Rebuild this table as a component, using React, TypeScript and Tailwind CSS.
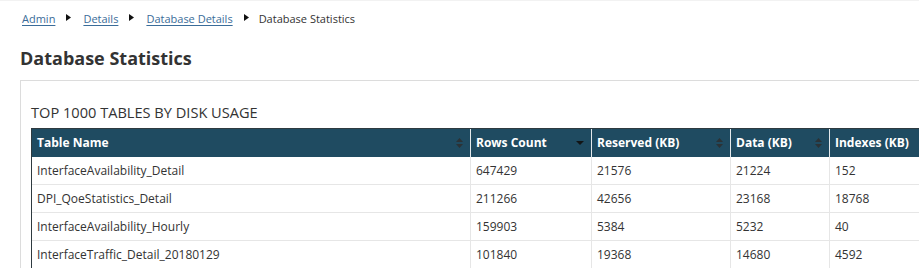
import React from "react";

const crumbs = ["Admin", "Details", "Database Details"];

const rows = [
  ["InterfaceAvailability_Detail", "647429", "21576", "21224", "152"],
  ["DPI_QoeStatistics_Detail", "211266", "42656", "23168", "18768"],
  ["InterfaceAvailability_Hourly", "159903", "5384", "5232", "40"],
  ["InterfaceTraffic_Detail_20180129", "101840", "19368", "14680", "4592"],
];

const widths = ["w-[438px]", "w-[121px]", "w-[139px]", "w-[99px]", "w-[220px]"];

function Arrow() {
  return (
    <svg width="5" height="7" viewBox="0 0 5 7" className="ml-[11px] mr-[12px] mt-[3px]">
      <path d="M0 0 L5 3.5 L0 7 Z" fill="#111" />
    </svg>
  );
}

function SortBoth() {
  return (
    <svg width="7" height="10" viewBox="0 0 7 10">
      <path d="M3.5 0 L7 4 L0 4 Z M0 6 L7 6 L3.5 10 Z" fill="#2b3236" />
    </svg>
  );
}

function SortDown() {
  return (
    <svg width="8" height="4" viewBox="0 0 8 4">
      <path d="M0 0 L8 0 L4 4 Z" fill="#121516" />
    </svg>
  );
}

const headers = [
  { label: "Table Name", icon: <SortBoth /> },
  { label: "Rows Count", icon: <SortDown /> },
  { label: "Reserved (KB)", icon: <SortBoth /> },
  { label: "Data (KB)", icon: <SortBoth /> },
  { label: "Indexes (KB)", icon: null },
];

export default function App() {
  return (
    <div
      className="h-[268px] w-[919px] overflow-hidden bg-white border-t border-[#f2f2f2] px-[20px] text-[#333]"
      style={{ fontFamily: '"Open Sans", "Liberation Sans", sans-serif' }}
    >
      <div className="mt-[10px] h-[15px] pl-[2px] flex items-start text-[11px] leading-[15px]">
        {crumbs.map((c) => (
          <React.Fragment key={c}>
            <a href="#" className="text-[#3a6c99] underline underline-offset-[2px]">
              {c}
            </a>
            <Arrow />
          </React.Fragment>
        ))}
        <span className="-ml-[2px]">Database Statistics</span>
      </div>

      <h1 className="mt-[20px] h-[24px] text-[18px] leading-[24px] font-bold text-[#333]">
        Database Statistics
      </h1>

      <div className="mt-[10px] w-[1100px] border border-r-0 border-[#dcdcdc] pl-[10px] pt-[21px] pb-[20px]">
        <h2 className="h-[20px] text-[14.6px] leading-[20px] font-normal mb-[6px]">
          TOP 1000 TABLES BY DISK USAGE
        </h2>

        <div className="border-t border-l border-[#2e3a40] w-[1020px]">
          <div className="flex h-[28px] bg-[#1f4b61] text-white text-[12px] font-bold">
            {headers.map((h, i) => (
              <div
                key={h.label}
                className={`${widths[i]} ${i > 0 ? "border-l border-[#e4e9ec]" : ""} flex items-center justify-between pl-[5px] pr-[7px]`}
              >
                <span>{h.label}</span>
                {h.icon}
              </div>
            ))}
          </div>
          {rows.map((r) => (
            <div key={r[0]} className="flex h-[28px] border-b border-[#e6e6e6] text-[12px] text-[#333]">
              {r.map((cell, i) => (
                <div
                  key={i}
                  className={`${widths[i]} ${i > 0 ? "border-l border-[#e6e6e6]" : ""} flex items-center pl-[5px]`}
                >
                  {cell}
                </div>
              ))}
            </div>
          ))}
        </div>
      </div>
    </div>
  );
}
